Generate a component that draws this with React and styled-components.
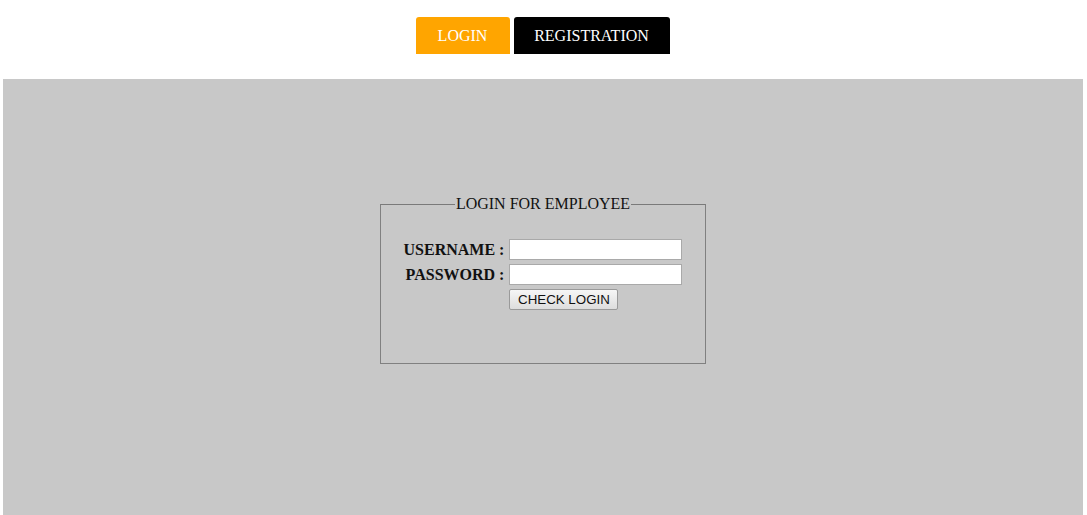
import styled, { createGlobalStyle } from "styled-components";

const GlobalStyle = createGlobalStyle`
  html, body {
    margin: 0;
    padding: 0;
    background: #ffffff;
  }
  body {
    font-family: "Liberation Serif", "Times New Roman", serif;
    font-size: 16px;
  }
`;

const Page = styled.div`
  display: flex;
  flex-direction: column;
  min-height: 515px;
`;

const Nav = styled.div`
  display: flex;
  justify-content: center;
  gap: 4px;
  padding-top: 17px;
  height: 79px;
  box-sizing: border-box;
  padding-right: 2px;
`;

const Tab = styled.a`
  display: flex;
  align-items: center;
  justify-content: center;
  height: 37px;
  width: ${(p) => p.$width}px;
  box-sizing: border-box;
  background: ${(p) => (p.$active ? "#ffa500" : "#000000")};
  color: #ffffff;
  font-size: 16px;
  border-radius: 3px 3px 0 0;
  text-decoration: none;
  cursor: pointer;
`;

const Panel = styled.div`
  flex: 1;
  margin: 0 4px 0 3px;
  background: #c8c8c8;
  display: flex;
  justify-content: center;
  align-items: flex-start;
  padding-top: 116px;
`;

const Fieldset = styled.fieldset`
  width: 326px;
  height: 169px;
  box-sizing: border-box;
  margin: 0;
  padding: 27px 0 0;
  border: 1px solid #808080;
  border-top-color: #7a7a7a;
  display: flex;
  justify-content: center;
  align-items: flex-start;
`;

const Legend = styled.legend`
  margin: 0 auto;
  padding: 0 1px;
  font-size: 16px;
  color: #111;
`;

const Form = styled.div`
  display: grid;
  grid-template-columns: auto auto;
  column-gap: 5px;
  row-gap: 4px;
  align-items: center;
  margin-top: -1px;
`;

const Label = styled.label`
  font-weight: bold;
  font-size: 16px;
  color: #111;
  text-align: right;
`;

const Input = styled.input`
  width: 173px;
  height: 21px;
  box-sizing: border-box;
  border: 1px solid #a9a9a9;
  background: #ffffff;
  margin: 0;
  padding: 1px 2px;
`;

const Button = styled.button`
  justify-self: start;
  height: 21px;
  width: 109px;
  box-sizing: border-box;
  font-family: "Liberation Sans", Arial, sans-serif;
  font-size: 13.33px;
  color: #111;
  background: linear-gradient(#f6f6f6, #dddddd);
  border: 1px solid #9a9a9a;
  border-radius: 2px;
  padding: 0;
  margin: 0;
`;

export default function App() {
  return (
    <Page>
      <GlobalStyle />
      <Nav>
        <Tab $active $width={94}>LOGIN</Tab>
        <Tab $width={156}>REGISTRATION</Tab>
      </Nav>
      <Panel>
        <Fieldset>
          <Legend>LOGIN FOR EMPLOYEE</Legend>
          <Form>
            <Label>USERNAME :</Label>
            <Input type="text" />
            <Label>PASSWORD :</Label>
            <Input type="password" />
            <span />
            <Button>CHECK LOGIN</Button>
          </Form>
        </Fieldset>
      </Panel>
    </Page>
  );
}
